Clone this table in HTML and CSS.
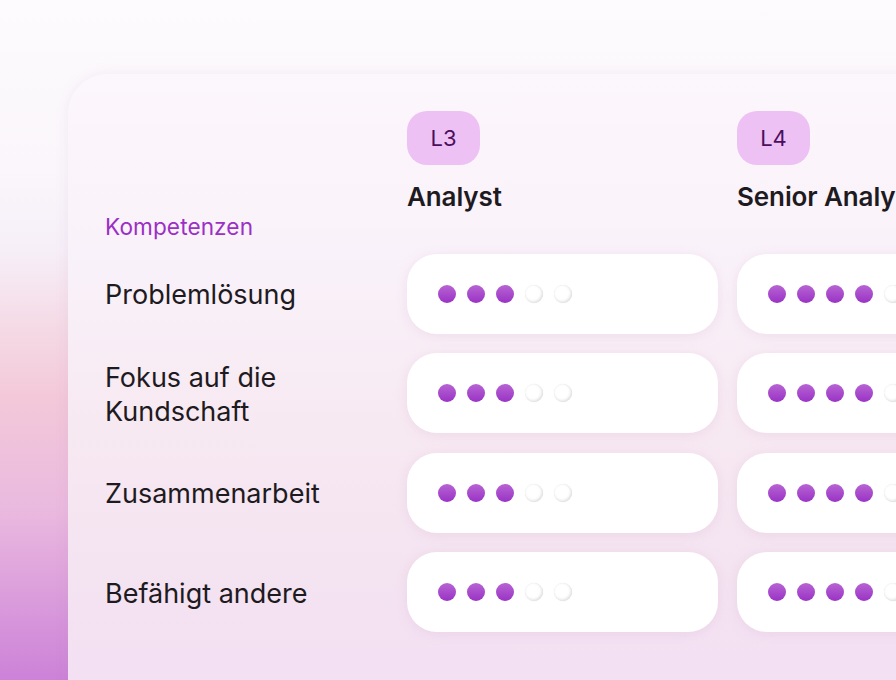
FILE: index.html
```html
<!DOCTYPE html>
<html lang="de">
<head>
<meta charset="utf-8">
<link rel="stylesheet" href="styles.css">
</head>
<body>
<div class="stage">
  <div class="card">
    <div class="grid">
      <div class="head-label"><span class="section">Kompetenzen</span></div>
      <div class="head-col">
        <span class="badge">L3</span>
        <span class="role">Analyst</span>
      </div>
      <div class="head-col">
        <span class="badge">L4</span>
        <span class="role">Senior Analyst</span>
      </div>

      <div class="label">Problemlösung</div>
      <div class="pill"><i class="dot on"></i><i class="dot on"></i><i class="dot on"></i><i class="dot"></i><i class="dot"></i></div>
      <div class="pill"><i class="dot on"></i><i class="dot on"></i><i class="dot on"></i><i class="dot on"></i><i class="dot"></i></div>

      <div class="label">Fokus auf die<br>Kundschaft</div>
      <div class="pill"><i class="dot on"></i><i class="dot on"></i><i class="dot on"></i><i class="dot"></i><i class="dot"></i></div>
      <div class="pill"><i class="dot on"></i><i class="dot on"></i><i class="dot on"></i><i class="dot on"></i><i class="dot"></i></div>

      <div class="label">Zusammenarbeit</div>
      <div class="pill"><i class="dot on"></i><i class="dot on"></i><i class="dot on"></i><i class="dot"></i><i class="dot"></i></div>
      <div class="pill"><i class="dot on"></i><i class="dot on"></i><i class="dot on"></i><i class="dot on"></i><i class="dot"></i></div>

      <div class="label">Befähigt andere</div>
      <div class="pill"><i class="dot on"></i><i class="dot on"></i><i class="dot on"></i><i class="dot"></i><i class="dot"></i></div>
      <div class="pill"><i class="dot on"></i><i class="dot on"></i><i class="dot on"></i><i class="dot on"></i><i class="dot"></i></div>
    </div>
  </div>
</div>
</body>
</html>
```

FILE: styles.css
```css
html, body {
  margin: 0;
  padding: 0;
  width: 896px;
  height: 680px;
  overflow: hidden;
}
body {
  font-family: "Inter", "Noto Sans", sans-serif;
  color: #1e1a21;
  background:
    linear-gradient(180deg, #fdfbfd 0px, #faf6fb 170px, #f6eff8 250px, #f5dce7 320px, #f3c8d9 400px, #eab9df 510px, #cc82d8 680px);
}
.stage {
  padding: 74px 0 0 68px;
}
.card {
  width: 1100px;
  height: 700px;
  box-sizing: border-box;
  padding: 37px 0 0 37px;
  border-radius: 40px 0 0 0;
  background: linear-gradient(180deg, #fcf7fc 0px, #f9f1f9 200px, #f7e9f2 350px, #f4e3f1 500px, #f3e0f3 606px);
  box-shadow: 0 0 14px rgba(170, 120, 170, 0.12);
}
.grid {
  display: grid;
  grid-template-columns: 283px 311px 311px;
  column-gap: 19px;
  grid-template-rows: auto repeat(4, 80px);
  row-gap: 19.5px;
  width: 1100px;
}
.head-label {
  display: flex;
  align-items: flex-end;
}
.section {
  font-size: 22.6px;
  color: #9a30c4;
  line-height: 24px;
  margin-bottom: -5px;
  letter-spacing: 0.1px;
}
.head-col {
  display: flex;
  flex-direction: column;
  align-items: flex-start;
  padding-bottom: 21px;
}
.badge {
  display: flex;
  align-items: center;
  justify-content: center;
  width: 73px;
  height: 54px;
  border-radius: 20px;
  background: #eec1f5;
  color: #4b0f5e;
  font-size: 22px;
}
.role {
  margin-top: 16px;
  font-size: 26px;
  line-height: 32px;
  font-weight: 600;
  letter-spacing: -0.1px;
  white-space: nowrap;
}
.label {
  display: flex;
  align-items: center;
  padding-top: 3px;
  font-size: 27px;
  line-height: 34px;
}
.pill {
  display: flex;
  align-items: center;
  gap: 11px;
  padding-left: 31px;
  border-radius: 30px;
  background: #ffffff;
  box-shadow: 0 2px 12px rgba(200, 150, 190, 0.18);
}
.dot {
  width: 18px;
  height: 18px;
  border-radius: 50%;
  background: #ffffff;
  box-shadow: inset -1px -1px 3px rgba(0, 0, 0, 0.14), 0 0 1px rgba(0, 0, 0, 0.12);
}
.dot.on {
  background: linear-gradient(180deg, #b764d3, #9a33c5);
  box-shadow: none;
}
```
